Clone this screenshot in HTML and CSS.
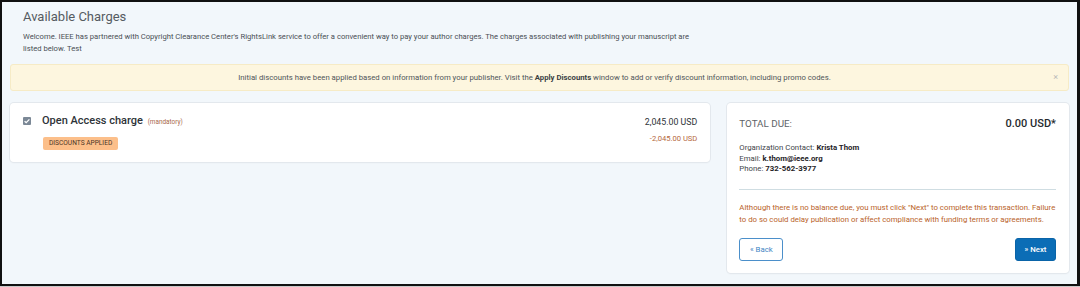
FILE: index.html
```html
<!DOCTYPE html>
<html>
<head>
<meta charset="utf-8">
<link rel="stylesheet" href="styles.css">
</head>
<body>
<div class="frame">
  <div class="page">
    <div class="header">
      <h1 class="title">Available Charges</h1>
      <p class="intro">Welcome. IEEE has partnered with Copyright Clearance Center's RightsLink service to offer a convenient way to pay your author charges. The charges associated with publishing your manuscript are listed below. Test</p>
    </div>
    <div class="alert">
      <span class="alert-text">Initial discounts have been applied based on information from your publisher. Visit the <b>Apply Discounts</b> window to add or verify discount information, including promo codes.</span>
      <span class="alert-close">×</span>
    </div>
    <div class="content">
      <div class="card charge">
        <div class="charge-left">
          <span class="checkbox"><svg width="8" height="8" viewBox="0 0 8 8"><path d="M1.6 4.2 L3.2 5.7 L6.4 2.4" fill="none" stroke="#fff" stroke-width="1.3"/></svg></span>
          <div class="charge-info">
            <div class="charge-name">Open Access charge <span class="mandatory">(mandatory)</span></div>
            <span class="badge">DISCOUNTS APPLIED</span>
          </div>
        </div>
        <div class="charge-amounts">
          <div class="amount">2,045.00 USD</div>
          <div class="discount">-2,045.00 USD</div>
        </div>
      </div>
      <div class="card total">
        <div class="total-row">
          <span class="total-label">TOTAL DUE:</span>
          <span class="total-value">0.00 USD*</span>
        </div>
        <div class="contact">
          <div>Organization Contact: <b>Krista Thom</b></div>
          <div>Email: <b>k.thom@ieee.org</b></div>
          <div>Phone: <b>732-562-3977</b></div>
        </div>
        <div class="divider"></div>
        <p class="warning">Although there is no balance due, you must click "Next" to complete this transaction. Failure to do so could delay publication or affect compliance with funding terms or agreements.</p>
        <div class="buttons">
          <span class="btn btn-back">« Back</span>
          <span class="btn btn-next">» Next</span>
        </div>
      </div>
    </div>
  </div>
</div>
</body>
</html>
```
FILE: styles.css
```css
html, body {
  margin: 0;
  padding: 0;
  background: #c9c9c9;
}
body {
  font-family: Roboto, "Liberation Sans", sans-serif;
  width: 1080px;
  height: 287px;
  overflow: hidden;
}
.frame {
  width: 1080px;
  height: 286px;
  box-sizing: border-box;
  border: 2px solid #111;
  border-right-width: 3px;
  background: #f2f7fb;
}
.page {
  padding: 0 8px 0 8px;
}
.header {
  padding: 7px 13px 0 13px;
}
.title {
  margin: 0;
  font-size: 13px;
  line-height: 16px;
  font-weight: 400;
  color: #555b61;
}
.intro {
  margin: 6px 0 0 0;
  font-size: 7.65px;
  line-height: 12px;
  color: #4a4f55;
  max-width: 680px;
}
.alert {
  margin-top: 9px;
  height: 27px;
  box-sizing: border-box;
  background: #fdf6df;
  border: 1px solid #f6ebc6;
  border-radius: 3px;
  display: flex;
  align-items: center;
  justify-content: center;
  padding-right: 10px;
  position: relative;
}
.alert-text {
  font-size: 7.75px;
  color: #4f555a;
}
.alert-text b {
  font-weight: 700;
  color: #3b3f44;
}
.alert-close {
  position: absolute;
  right: 10px;
  top: 7px;
  font-size: 9px;
  color: #b9b9b9;
}
.content {
  margin-top: 12px;
  display: flex;
  gap: 17px;
  align-items: flex-start;
}
.card {
  background: #fff;
  border-radius: 4px;
  box-shadow: 0 0 0 1px #e3e8ed, 0 1px 2px rgba(0,0,0,0.06);
}
.charge {
  width: 701px;
  height: 59px;
  box-sizing: border-box;
  padding: 10px 13px 0 13px;
  display: flex;
  justify-content: space-between;
}
.charge-left {
  display: flex;
  gap: 11px;
}
.checkbox {
  margin-top: 4px;
  width: 8px;
  height: 8px;
  background: #7b8896;
  border-radius: 1px;
  display: flex;
}
.charge-name {
  font-size: 11px;
  line-height: 16px;
  font-weight: 500;
  color: #2e3338;
}
.mandatory {
  font-size: 6.4px;
  font-weight: 400;
  color: #a8694a;
  margin-left: 2px;
}
.badge {
  display: inline-block;
  margin-top: 6px;
  margin-left: 1px;
  height: 13px;
  line-height: 13px;
  padding: 0 6px;
  background: #fcbf8a;
  border-radius: 2px;
  font-size: 6.6px;
  color: #4c3526;
}
.charge-amounts {
  text-align: right;
  padding-top: 2px;
}
.amount {
  font-size: 8.8px;
  line-height: 14px;
  color: #2e3338;
}
.discount {
  margin-top: 4px;
  font-size: 7.6px;
  line-height: 12px;
  color: #b5683d;
}
.total {
  width: 342px;
  box-sizing: border-box;
  padding: 12px 13px 12px 12px;
}
.total-row {
  display: flex;
  justify-content: space-between;
  align-items: center;
  height: 16px;
}
.total-label {
  font-size: 9.8px;
  color: #5d6368;
}
.total-value {
  font-size: 11px;
  font-weight: 500;
  color: #25292d;
}
.contact {
  margin-top: 12px;
  font-size: 7.8px;
  line-height: 10.5px;
  color: #3f454a;
}
.contact b {
  color: #1f2327;
  font-weight: 700;
}
.divider {
  margin-top: 14px;
  height: 1px;
  background: #cfdde2;
}
.warning {
  margin: 12px 0 0 0;
  font-size: 7.8px;
  line-height: 12px;
  color: #b9632a;
}
.buttons {
  margin-top: 12px;
  display: flex;
  justify-content: space-between;
}
.btn {
  height: 23px;
  box-sizing: border-box;
  border-radius: 3px;
  display: flex;
  align-items: center;
  justify-content: center;
  font-size: 7.8px;
}
.btn-back {
  width: 44px;
  border: 1px solid #4b8fca;
  color: #3f86c4;
}
.btn-next {
  width: 41px;
  background: #0b6db6;
  border: 1px solid #0a64a8;
  color: #fff;
  font-weight: 500;
}
```
